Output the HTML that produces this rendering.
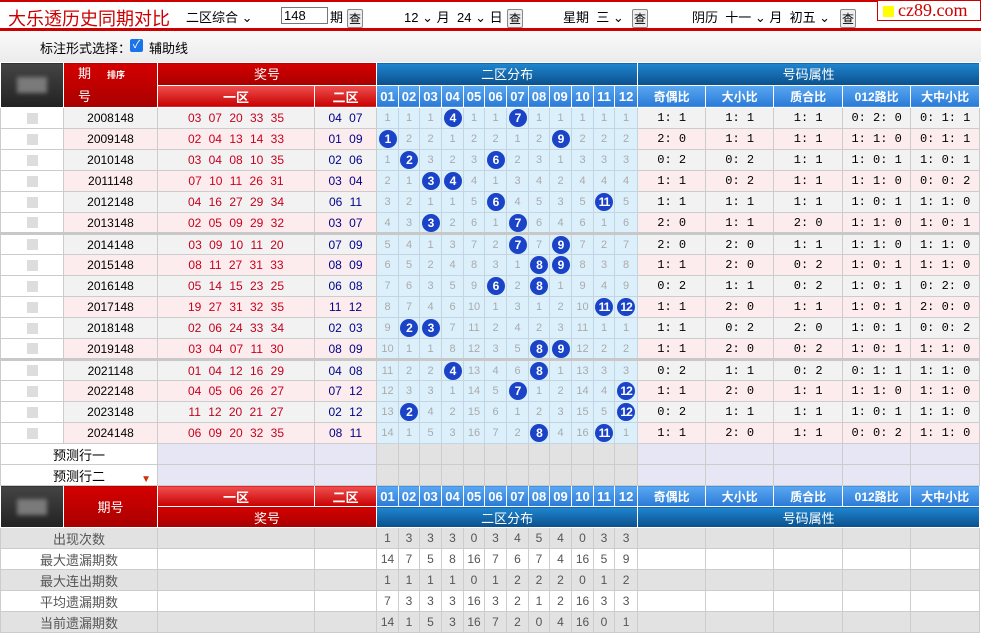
<!DOCTYPE html>
<html><head><meta charset="utf-8">
<style>
*{margin:0;padding:0;box-sizing:border-box}
body{width:981px;height:634px;overflow:hidden;background:#fff;font-family:"Liberation Sans","Noto Sans CJK SC",sans-serif;font-size:12px;color:#000;position:relative}
.top{position:absolute;left:0;top:0;width:981px;height:31px;border-top:2px solid #c00;border-bottom:3px solid #c00;background:#fff}
.top span{position:absolute;top:5px;font-size:13px;white-space:nowrap}
.title{left:8px!important;top:3px!important;font-size:18px!important;color:#c00}
.btn{display:inline-block;position:absolute;top:7px!important;width:16px;height:19px;border:1px solid #888;background:#eee;border-radius:2px;font-size:12px!important;text-align:center;line-height:18px}
.inp{position:absolute;left:281px;top:5px;width:47px;height:17px;border:1px solid #777;font-size:13px;padding-left:2px;line-height:15px}
.logo{position:absolute;left:877px;top:0px;width:104px;height:21px;border:1px solid #c00;background:#fff;color:#c00;font-family:"Liberation Serif",serif;font-size:18px;line-height:19px;padding-left:20px}
.logo i{position:absolute;left:5px;top:5px;width:11px;height:11px;background:#ff0}
.band{position:absolute;left:0;top:31px;width:981px;height:31px;background:linear-gradient(#fafafa,#ebebeb)}
.band span{position:absolute;top:7px;font-size:13px}
.cb{position:absolute;left:130px;top:8px;width:13px;height:13px;background:#1a73e8;border-radius:2px;color:#fff;font-size:11px;line-height:13px;text-align:center}
table{position:absolute;left:0;top:62px;width:979px;border-collapse:collapse;table-layout:fixed}
td{height:21px;border:1px solid #ccc;text-align:center;padding:0;white-space:nowrap;overflow:hidden}
.im{background:linear-gradient(#444,#222);border-color:#fff}
.im i{display:block;margin:0 auto;width:30px;height:16px;background:#7a7a7a;filter:blur(2px)}
.rh{background:linear-gradient(#d40000,#a80000);color:#fff;border:1px solid #fff;font-size:13px}
.rh2{background:linear-gradient(#f05050,#c80000);color:#fff;border:1px solid #fff;font-size:13px;font-weight:bold}
.bh{background:linear-gradient(#1f86d0,#0a4f8c);color:#fff;border:1px solid #fff;font-size:13px}
.bh2{background:linear-gradient(#5aa8f0,#2a7ad8);color:#fff;border:1px solid #fff;font-size:12px;font-weight:bold}
.bh2.n{font-family:"Liberation Sans",sans-serif;font-size:13px}
tr.e td{background:#f2f2f2}
tr.o td{background:#fdeced}
td.w{background:#fff!important}
td.w i{display:block;margin:0 auto;width:11px;height:11px;background:#ddd}
td.f{color:#c8001e;word-spacing:4px;font-size:12px}
td.k{color:#00008b;word-spacing:4px}
tr td.d{background:#dcf0fc;color:#aaa;font-size:11px;border-color:#c4d4e0}
td.a{font-family:"Liberation Mono",monospace;font-size:12px}
td.d b{display:inline-block;width:18px;height:18px;border-radius:50%;background:#1a43c8;color:#fff;font-size:12px;line-height:18px;font-weight:bold;letter-spacing:-1px}
tr.sep td{border-bottom:3px solid #c8c8c8}
.pl td{background:#fff}
.pl td.lv{background:#e6e6f5}
.pl td.gy{background:#e2e2e2}
.sg td{background:#e2e2e2;color:#555}
.sw td{background:#fff;color:#555}
.sg td.v,.sw td.v{color:#555;font-size:12px}
</style></head><body>
<div class="top">
<span class="title">大乐透历史同期对比</span>
<span style="left:186px">二区综合 ⌄</span>
<div class="inp">148</div>
<span style="left:330px">期</span><span class="btn" style="left:347px">查</span>
<span style="left:404px">12 ⌄ 月</span>
<span style="left:457px">24 ⌄ 日</span><span class="btn" style="left:507px">查</span>
<span style="left:563px">星期&nbsp;&nbsp;三 ⌄</span><span class="btn" style="left:632px">查</span>
<span style="left:692px">阴历&nbsp;&nbsp;十一 ⌄ 月&nbsp;&nbsp;初五 ⌄</span><span class="btn" style="left:840px">查</span>
</div>
<div class="logo"><i></i>cz89.com</div>
<div class="band"><span style="left:40px">标注形式选择：</span><div class="cb">✓</div><span style="left:149px">辅助线</span></div>
<table>
<colgroup><col style="width:63px"><col style="width:94px"><col style="width:157px"><col style="width:62px">
<col style="width:22px"><col style="width:21px"><col style="width:22px"><col style="width:22px"><col style="width:21px"><col style="width:22px"><col style="width:22px"><col style="width:21px"><col style="width:22px"><col style="width:22px"><col style="width:21px"><col style="width:23px">
<col style="width:68px"><col style="width:68px"><col style="width:69px"><col style="width:68px"><col style="width:69px"></colgroup>
<tr><td class="im" rowspan="2"><i></i></td><td class="rh" rowspan="2" style="text-align:left;padding-left:14px;line-height:21px">期<span style="font-size:9px;font-weight:bold;margin-left:16px">排序</span><br>号</td><td class="rh" colspan="2">奖号</td><td class="bh" colspan="12">二区分布</td><td class="bh" colspan="5">号码属性</td></tr>
<tr><td class="rh2">一区</td><td class="rh2">二区</td><td class="bh2 n">01</td><td class="bh2 n">02</td><td class="bh2 n">03</td><td class="bh2 n">04</td><td class="bh2 n">05</td><td class="bh2 n">06</td><td class="bh2 n">07</td><td class="bh2 n">08</td><td class="bh2 n">09</td><td class="bh2 n">10</td><td class="bh2 n">11</td><td class="bh2 n">12</td><td class="bh2">奇偶比</td><td class="bh2">大小比</td><td class="bh2">质合比</td><td class="bh2">012路比</td><td class="bh2">大中小比</td></tr>
<tr class="e"><td class="w"><i></i></td><td>2008148</td><td class="f">03 07 20 33 35</td><td class="k">04 07</td><td class="d">1</td><td class="d">1</td><td class="d">1</td><td class="d"><b>4</b></td><td class="d">1</td><td class="d">1</td><td class="d"><b>7</b></td><td class="d">1</td><td class="d">1</td><td class="d">1</td><td class="d">1</td><td class="d">1</td><td class="a">1: 1</td><td class="a">1: 1</td><td class="a">1: 1</td><td class="a">0: 2: 0</td><td class="a">0: 1: 1</td></tr>
<tr class="o"><td class="w"><i></i></td><td>2009148</td><td class="f">02 04 13 14 33</td><td class="k">01 09</td><td class="d"><b>1</b></td><td class="d">2</td><td class="d">2</td><td class="d">1</td><td class="d">2</td><td class="d">2</td><td class="d">1</td><td class="d">2</td><td class="d"><b>9</b></td><td class="d">2</td><td class="d">2</td><td class="d">2</td><td class="a">2: 0</td><td class="a">1: 1</td><td class="a">1: 1</td><td class="a">1: 1: 0</td><td class="a">0: 1: 1</td></tr>
<tr class="e"><td class="w"><i></i></td><td>2010148</td><td class="f">03 04 08 10 35</td><td class="k">02 06</td><td class="d">1</td><td class="d"><b>2</b></td><td class="d">3</td><td class="d">2</td><td class="d">3</td><td class="d"><b>6</b></td><td class="d">2</td><td class="d">3</td><td class="d">1</td><td class="d">3</td><td class="d">3</td><td class="d">3</td><td class="a">0: 2</td><td class="a">0: 2</td><td class="a">1: 1</td><td class="a">1: 0: 1</td><td class="a">1: 0: 1</td></tr>
<tr class="o"><td class="w"><i></i></td><td>2011148</td><td class="f">07 10 11 26 31</td><td class="k">03 04</td><td class="d">2</td><td class="d">1</td><td class="d"><b>3</b></td><td class="d"><b>4</b></td><td class="d">4</td><td class="d">1</td><td class="d">3</td><td class="d">4</td><td class="d">2</td><td class="d">4</td><td class="d">4</td><td class="d">4</td><td class="a">1: 1</td><td class="a">0: 2</td><td class="a">1: 1</td><td class="a">1: 1: 0</td><td class="a">0: 0: 2</td></tr>
<tr class="e"><td class="w"><i></i></td><td>2012148</td><td class="f">04 16 27 29 34</td><td class="k">06 11</td><td class="d">3</td><td class="d">2</td><td class="d">1</td><td class="d">1</td><td class="d">5</td><td class="d"><b>6</b></td><td class="d">4</td><td class="d">5</td><td class="d">3</td><td class="d">5</td><td class="d"><b>11</b></td><td class="d">5</td><td class="a">1: 1</td><td class="a">1: 1</td><td class="a">1: 1</td><td class="a">1: 0: 1</td><td class="a">1: 1: 0</td></tr>
<tr class="o sep"><td class="w"><i></i></td><td>2013148</td><td class="f">02 05 09 29 32</td><td class="k">03 07</td><td class="d">4</td><td class="d">3</td><td class="d"><b>3</b></td><td class="d">2</td><td class="d">6</td><td class="d">1</td><td class="d"><b>7</b></td><td class="d">6</td><td class="d">4</td><td class="d">6</td><td class="d">1</td><td class="d">6</td><td class="a">2: 0</td><td class="a">1: 1</td><td class="a">2: 0</td><td class="a">1: 1: 0</td><td class="a">1: 0: 1</td></tr>
<tr class="e"><td class="w"><i></i></td><td>2014148</td><td class="f">03 09 10 11 20</td><td class="k">07 09</td><td class="d">5</td><td class="d">4</td><td class="d">1</td><td class="d">3</td><td class="d">7</td><td class="d">2</td><td class="d"><b>7</b></td><td class="d">7</td><td class="d"><b>9</b></td><td class="d">7</td><td class="d">2</td><td class="d">7</td><td class="a">2: 0</td><td class="a">2: 0</td><td class="a">1: 1</td><td class="a">1: 1: 0</td><td class="a">1: 1: 0</td></tr>
<tr class="o"><td class="w"><i></i></td><td>2015148</td><td class="f">08 11 27 31 33</td><td class="k">08 09</td><td class="d">6</td><td class="d">5</td><td class="d">2</td><td class="d">4</td><td class="d">8</td><td class="d">3</td><td class="d">1</td><td class="d"><b>8</b></td><td class="d"><b>9</b></td><td class="d">8</td><td class="d">3</td><td class="d">8</td><td class="a">1: 1</td><td class="a">2: 0</td><td class="a">0: 2</td><td class="a">1: 0: 1</td><td class="a">1: 1: 0</td></tr>
<tr class="e"><td class="w"><i></i></td><td>2016148</td><td class="f">05 14 15 23 25</td><td class="k">06 08</td><td class="d">7</td><td class="d">6</td><td class="d">3</td><td class="d">5</td><td class="d">9</td><td class="d"><b>6</b></td><td class="d">2</td><td class="d"><b>8</b></td><td class="d">1</td><td class="d">9</td><td class="d">4</td><td class="d">9</td><td class="a">0: 2</td><td class="a">1: 1</td><td class="a">0: 2</td><td class="a">1: 0: 1</td><td class="a">0: 2: 0</td></tr>
<tr class="o"><td class="w"><i></i></td><td>2017148</td><td class="f">19 27 31 32 35</td><td class="k">11 12</td><td class="d">8</td><td class="d">7</td><td class="d">4</td><td class="d">6</td><td class="d">10</td><td class="d">1</td><td class="d">3</td><td class="d">1</td><td class="d">2</td><td class="d">10</td><td class="d"><b>11</b></td><td class="d"><b>12</b></td><td class="a">1: 1</td><td class="a">2: 0</td><td class="a">1: 1</td><td class="a">1: 0: 1</td><td class="a">2: 0: 0</td></tr>
<tr class="e"><td class="w"><i></i></td><td>2018148</td><td class="f">02 06 24 33 34</td><td class="k">02 03</td><td class="d">9</td><td class="d"><b>2</b></td><td class="d"><b>3</b></td><td class="d">7</td><td class="d">11</td><td class="d">2</td><td class="d">4</td><td class="d">2</td><td class="d">3</td><td class="d">11</td><td class="d">1</td><td class="d">1</td><td class="a">1: 1</td><td class="a">0: 2</td><td class="a">2: 0</td><td class="a">1: 0: 1</td><td class="a">0: 0: 2</td></tr>
<tr class="o sep"><td class="w"><i></i></td><td>2019148</td><td class="f">03 04 07 11 30</td><td class="k">08 09</td><td class="d">10</td><td class="d">1</td><td class="d">1</td><td class="d">8</td><td class="d">12</td><td class="d">3</td><td class="d">5</td><td class="d"><b>8</b></td><td class="d"><b>9</b></td><td class="d">12</td><td class="d">2</td><td class="d">2</td><td class="a">1: 1</td><td class="a">2: 0</td><td class="a">0: 2</td><td class="a">1: 0: 1</td><td class="a">1: 1: 0</td></tr>
<tr class="e"><td class="w"><i></i></td><td>2021148</td><td class="f">01 04 12 16 29</td><td class="k">04 08</td><td class="d">11</td><td class="d">2</td><td class="d">2</td><td class="d"><b>4</b></td><td class="d">13</td><td class="d">4</td><td class="d">6</td><td class="d"><b>8</b></td><td class="d">1</td><td class="d">13</td><td class="d">3</td><td class="d">3</td><td class="a">0: 2</td><td class="a">1: 1</td><td class="a">0: 2</td><td class="a">0: 1: 1</td><td class="a">1: 1: 0</td></tr>
<tr class="o"><td class="w"><i></i></td><td>2022148</td><td class="f">04 05 06 26 27</td><td class="k">07 12</td><td class="d">12</td><td class="d">3</td><td class="d">3</td><td class="d">1</td><td class="d">14</td><td class="d">5</td><td class="d"><b>7</b></td><td class="d">1</td><td class="d">2</td><td class="d">14</td><td class="d">4</td><td class="d"><b>12</b></td><td class="a">1: 1</td><td class="a">2: 0</td><td class="a">1: 1</td><td class="a">1: 1: 0</td><td class="a">1: 1: 0</td></tr>
<tr class="e"><td class="w"><i></i></td><td>2023148</td><td class="f">11 12 20 21 27</td><td class="k">02 12</td><td class="d">13</td><td class="d"><b>2</b></td><td class="d">4</td><td class="d">2</td><td class="d">15</td><td class="d">6</td><td class="d">1</td><td class="d">2</td><td class="d">3</td><td class="d">15</td><td class="d">5</td><td class="d"><b>12</b></td><td class="a">0: 2</td><td class="a">1: 1</td><td class="a">1: 1</td><td class="a">1: 0: 1</td><td class="a">1: 1: 0</td></tr>
<tr class="o"><td class="w"><i></i></td><td>2024148</td><td class="f">06 09 20 32 35</td><td class="k">08 11</td><td class="d">14</td><td class="d">1</td><td class="d">5</td><td class="d">3</td><td class="d">16</td><td class="d">7</td><td class="d">2</td><td class="d"><b>8</b></td><td class="d">4</td><td class="d">16</td><td class="d"><b>11</b></td><td class="d">1</td><td class="a">1: 1</td><td class="a">2: 0</td><td class="a">1: 1</td><td class="a">0: 0: 2</td><td class="a">1: 1: 0</td></tr>
<tr class="pl"><td colspan="2" style="font-size:13px;border-right-color:#ccc">预测行一</td><td class="lv"></td><td class="lv"></td><td class="gy"></td><td class="gy"></td><td class="gy"></td><td class="gy"></td><td class="gy"></td><td class="gy"></td><td class="gy"></td><td class="gy"></td><td class="gy"></td><td class="gy"></td><td class="gy"></td><td class="gy"></td><td class="lv"></td><td class="lv"></td><td class="lv"></td><td class="lv"></td><td class="lv"></td></tr>
<tr class="pl"><td colspan="2" style="font-size:13px;position:relative">预测行二<span style="position:absolute;right:6px;bottom:0;color:#c30;font-size:10px">▼</span></td><td class="lv"></td><td class="lv"></td><td class="gy"></td><td class="gy"></td><td class="gy"></td><td class="gy"></td><td class="gy"></td><td class="gy"></td><td class="gy"></td><td class="gy"></td><td class="gy"></td><td class="gy"></td><td class="gy"></td><td class="gy"></td><td class="lv"></td><td class="lv"></td><td class="lv"></td><td class="lv"></td><td class="lv"></td></tr>
<tr><td class="im" rowspan="2"><i></i></td><td class="rh" rowspan="2">期号</td><td class="rh2">一区</td><td class="rh2">二区</td><td class="bh2 n">01</td><td class="bh2 n">02</td><td class="bh2 n">03</td><td class="bh2 n">04</td><td class="bh2 n">05</td><td class="bh2 n">06</td><td class="bh2 n">07</td><td class="bh2 n">08</td><td class="bh2 n">09</td><td class="bh2 n">10</td><td class="bh2 n">11</td><td class="bh2 n">12</td><td class="bh2">奇偶比</td><td class="bh2">大小比</td><td class="bh2">质合比</td><td class="bh2">012路比</td><td class="bh2">大中小比</td></tr>
<tr><td class="rh" colspan="2">奖号</td><td class="bh" colspan="12">二区分布</td><td class="bh" colspan="5">号码属性</td></tr>
<tr class="sg"><td colspan="2" style="font-size:13px">出现次数</td><td></td><td></td><td class="v">1</td><td class="v">3</td><td class="v">3</td><td class="v">3</td><td class="v">0</td><td class="v">3</td><td class="v">4</td><td class="v">5</td><td class="v">4</td><td class="v">0</td><td class="v">3</td><td class="v">3</td><td></td><td></td><td></td><td></td><td></td></tr>
<tr class="sw"><td colspan="2" style="font-size:13px">最大遗漏期数</td><td></td><td></td><td class="v">14</td><td class="v">7</td><td class="v">5</td><td class="v">8</td><td class="v">16</td><td class="v">7</td><td class="v">6</td><td class="v">7</td><td class="v">4</td><td class="v">16</td><td class="v">5</td><td class="v">9</td><td></td><td></td><td></td><td></td><td></td></tr>
<tr class="sg"><td colspan="2" style="font-size:13px">最大连出期数</td><td></td><td></td><td class="v">1</td><td class="v">1</td><td class="v">1</td><td class="v">1</td><td class="v">0</td><td class="v">1</td><td class="v">2</td><td class="v">2</td><td class="v">2</td><td class="v">0</td><td class="v">1</td><td class="v">2</td><td></td><td></td><td></td><td></td><td></td></tr>
<tr class="sw"><td colspan="2" style="font-size:13px">平均遗漏期数</td><td></td><td></td><td class="v">7</td><td class="v">3</td><td class="v">3</td><td class="v">3</td><td class="v">16</td><td class="v">3</td><td class="v">2</td><td class="v">1</td><td class="v">2</td><td class="v">16</td><td class="v">3</td><td class="v">3</td><td></td><td></td><td></td><td></td><td></td></tr>
<tr class="sg"><td colspan="2" style="font-size:13px">当前遗漏期数</td><td></td><td></td><td class="v">14</td><td class="v">1</td><td class="v">5</td><td class="v">3</td><td class="v">16</td><td class="v">7</td><td class="v">2</td><td class="v">0</td><td class="v">4</td><td class="v">16</td><td class="v">0</td><td class="v">1</td><td></td><td></td><td></td><td></td><td></td></tr>
</table>
</body></html>
